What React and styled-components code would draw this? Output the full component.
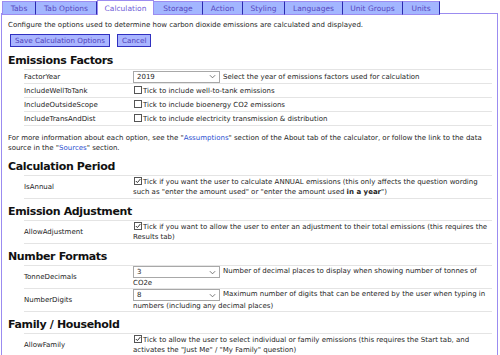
import React from "react";
import styled, { createGlobalStyle } from "styled-components";

const Global = createGlobalStyle`
  html, body { margin: 0; padding: 0; background: #fff; }
  body { font-family: "DejaVu Sans", Verdana, sans-serif; font-size: 7px; color: #1e1e1e; }
`;

const Page = styled.div`
  width: 500px;
  height: 355px;
  overflow: hidden;
`;

const TabBar = styled.div`
  display: flex;
  padding-left: 2px;
  height: 14px;
  position: relative;
  z-index: 1;
`;

const Tab = styled.div`
  box-sizing: border-box;
  width: ${(p) => p.$w}px;
  height: ${(p) => (p.$active ? 15 : 14)}px;
  margin-top: ${(p) => (p.$active ? 0 : 1)}px;
  display: flex;
  align-items: center;
  justify-content: center;
  background: ${(p) => (p.$active ? "#fff" : "#a3b6ff")};
  color: ${(p) => (p.$active ? "#7060d8" : "#5848c0")};
  border: 1px solid #9b8cf0;
  border-right: 1px solid ${(p) => (p.$active ? "#9b8cf0" : "#2a2ab0")};
  border-bottom: ${(p) => (p.$active ? "none" : "1px solid #9b8cf0")};
  border-left: ${(p) => (p.$first || p.$active ? "1px solid #9b8cf0" : "none")};
  font-size: 7.5px;
`;

const Panel = styled.div`
  box-sizing: border-box;
  margin-left: 1px;
  width: 497px;
  height: 345px;
  border: 1.5px solid #9b8cf0;
  border-bottom: none;
  margin-top: -1px;
  padding: 6px 0 0 6px;
`;

const Intro = styled.p`
  margin: 0 0 4px 0;
  line-height: 10px;
`;

const ButtonRow = styled.div`
  display: flex;
  gap: 7px;
  margin-left: 2px;
  margin-bottom: 5px;
`;

const Button = styled.button`
  font-family: inherit;
  font-size: 7.2px;
  color: #5040b8;
  background: #a9b5ff;
  border: 1px solid #3030c0;
  border-radius: 0;
  height: 13px;
  padding: 0 4px;
  line-height: 11px;
`;

const Heading = styled.h2`
  font-size: 11px;
  letter-spacing: -0.35px;
  font-weight: bold;
  margin: 0;
  height: 17px;
  line-height: 17px;
  color: #111;
`;

const Table = styled.div`
  margin-left: 16px;
  width: 468px;
  border-top: 1px solid #e4e4e4;
`;

const Row = styled.div`
  display: grid;
  grid-template-columns: 109px 1fr;
  border-bottom: 1px solid #e4e4e4;
  min-height: 13px;
`;

const Label = styled.div`
  display: flex;
  align-items: center;
  font-size: 7px;
  color: #222;
`;

const Value = styled.div`
  line-height: 10px;
  padding: ${(p) => (p.$pad ? "1px 0" : "0")};
  display: ${(p) => (p.$inline ? "flex" : "block")};
  align-items: center;
  align-self: center;
`;

const Select = styled.div`
  box-sizing: border-box;
  display: inline-flex;
  align-items: center;
  justify-content: space-between;
  width: 87px;
  height: 12px;
  border: 1px solid #a8a8a8;
  padding: 0 3px;
  vertical-align: top;
  margin-right: 3px;
  background: #fff;
  font-size: 7px;
  svg { width: 7px; height: 5px; }
`;

const Check = styled.span`
  box-sizing: border-box;
  display: inline-block;
  width: 8px;
  height: 8px;
  border: 1px solid #555;
  margin: 0 1px 0 1px;
  vertical-align: -1px;
  position: relative;
  svg { position: absolute; left: 0; top: 0; width: 6px; height: 6px; }
`;

const Note = styled.p`
  margin: 7px 0 5px 0;
  line-height: 10px;
`;

const Link = styled.a`
  color: #2b50d0;
  text-decoration: none;
`;

const Section = styled.div`
  margin-bottom: 4px;
`;

const Chevron = () => (
  <svg viewBox="0 0 8 5">
    <path d="M1 1 L4 4 L7 1" fill="none" stroke="#666" strokeWidth="1" />
  </svg>
);

const Box = ({ checked }) => (
  <Check>
    {checked && (
      <svg viewBox="0 0 6 6">
        <path d="M0.8 3 L2.4 4.6 L5.4 1" fill="none" stroke="#333" strokeWidth="1" />
      </svg>
    )}
  </Check>
);

const tabs = [
  ["Tabs", 34],
  ["Tab Options", 61],
  ["Calculation", 57],
  ["Storage", 49],
  ["Action", 40],
  ["Styling", 42],
  ["Languages", 58],
  ["Unit Groups", 60],
  ["Units", 37],
];

export default function App() {
  return (
    <Page>
      <Global />
      <TabBar>
        {tabs.map(([t, w], i) => (
          <Tab key={t} $w={w} $first={i === 0} $active={t === "Calculation"}>
            {t}
          </Tab>
        ))}
      </TabBar>
      <Panel>
        <Intro>Configure the options used to determine how carbon dioxide emissions are calculated and displayed.</Intro>
        <ButtonRow>
          <Button>Save Calculation Options</Button>
          <Button>Cancel</Button>
        </ButtonRow>

        <Heading>Emissions Factors</Heading>
        <Table>
          <Row>
            <Label>FactorYear</Label>
            <Value $inline>
              <Select>2019<Chevron /></Select>
              Select the year of emissions factors used for calculation
            </Value>
          </Row>
          <Row>
            <Label>IncludeWellToTank</Label>
            <Value><Box />Tick to include well-to-tank emissions</Value>
          </Row>
          <Row>
            <Label>IncludeOutsideScope</Label>
            <Value><Box />Tick to include bioenergy CO2 emissions</Value>
          </Row>
          <Row>
            <Label>IncludeTransAndDist</Label>
            <Value><Box />Tick to include electricity transmission &amp; distribution</Value>
          </Row>
        </Table>
        <Note>
          For more information about each option, see the "<Link>Assumptions</Link>" section of the About tab of the calculator, or follow the link to the data source in the "<Link>Sources</Link>" section.
        </Note>

        <Section>
          <Heading>Calculation Period</Heading>
          <Table>
            <Row>
              <Label>IsAnnual</Label>
              <Value $pad>
                <Box checked />Tick if you want the user to calculate ANNUAL emissions (this only affects the question wording such as "enter the amount used" or "enter the amount used <b>in a year</b>")
              </Value>
            </Row>
          </Table>
        </Section>

        <Section>
          <Heading>Emission Adjustment</Heading>
          <Table>
            <Row>
              <Label>AllowAdjustment</Label>
              <Value $pad>
                <Box checked />Tick if you want to allow the user to enter an adjustment to their total emissions (this requires the Results tab)
              </Value>
            </Row>
          </Table>
        </Section>

        <Section>
          <Heading>Number Formats</Heading>
          <Table>
            <Row>
              <Label>TonneDecimals</Label>
              <Value>
                <Select>3<Chevron /></Select>Number of decimal places to display when showing number of tonnes of CO2e
              </Value>
            </Row>
            <Row>
              <Label>NumberDigits</Label>
              <Value>
                <Select>8<Chevron /></Select>Maximum number of digits that can be entered by the user when typing in numbers (including any decimal places)
              </Value>
            </Row>
          </Table>
        </Section>

        <Section>
          <Heading>Family / Household</Heading>
          <Table>
            <Row>
              <Label>AllowFamily</Label>
              <Value $pad>
                <Box checked />Tick to allow the user to select individual or family emissions (this requires the Start tab, and activates the "Just Me" / "My Family" question)
              </Value>
            </Row>
          </Table>
        </Section>
      </Panel>
    </Page>
  );
}
